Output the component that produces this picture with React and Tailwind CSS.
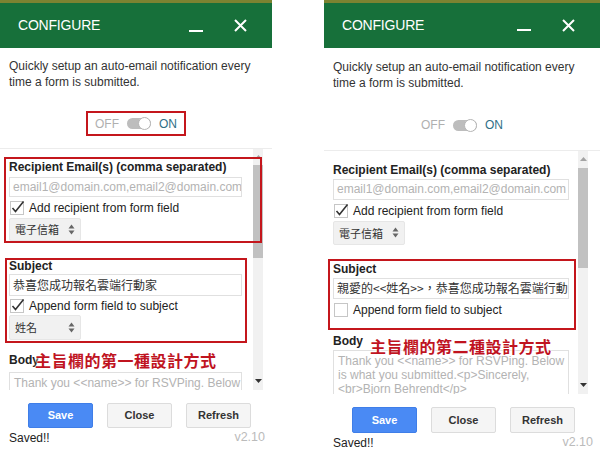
import React from 'react'

const SANS = { fontFamily: '"Liberation Sans", Arial, "Noto Sans CJK TC", sans-serif' }
const CJK = { fontFamily: '"Noto Sans CJK TC", "Liberation Sans", sans-serif' }

function Check({ on }) {
  return (
    <svg width="14" height="14" viewBox="0 0 14 14" className="shrink-0 overflow-visible">
      <rect x="0.5" y="0.5" width="13" height="13" fill="#fff" stroke="#c6c6c6" />
      {on && <path d="M2.5 7 L5.5 10.5 L13.5 0.5" fill="none" stroke="#333" strokeWidth="1.6" />}
    </svg>
  )
}

function Select({ label, h }) {
  return (
    <div className={`flex items-center justify-between w-[72px] ${h} pl-[5px] pr-[5px] bg-[#f1f1f1] border border-[#e6e6e6] rounded-[2px]`}>
      <span className="text-[11px] text-[#333]" style={CJK}>{label}</span>
      <svg width="7" height="11" viewBox="0 0 7 11">
        <path d="M0.5 4.5 L3.5 0.5 L6.5 4.5 Z M0.5 6.5 L3.5 10.5 L6.5 6.5 Z" fill="#666" />
      </svg>
    </div>
  )
}

function Scrollbar({ top, thumb, bottom }) {
  return (
    <div className="w-[10px] flex flex-col bg-[#f1f1f1]">
      <div className={`${top} flex items-center justify-center`}>
        <svg width="7" height="4" viewBox="0 0 7 4"><path d="M0 4 L3.5 0 L7 4 Z" fill="#a3a3a3" /></svg>
      </div>
      <div className={`${thumb} bg-[#c1c1c1]`} />
      <div className="flex-1" />
      <div className={`${bottom} flex items-center justify-center`}>
        <svg width="7" height="4" viewBox="0 0 7 4"><path d="M0 0 L3.5 4 L7 0 Z" fill="#333" /></svg>
      </div>
    </div>
  )
}

function Header() {
  return (
    <>
      <div className="h-[3px] bg-[#7c8331]" />
      <div className="h-[45px] bg-[#17703a] flex items-center pl-[18px] pr-[25px] text-white">
        <span className="text-[14px] tracking-[-0.2px]" style={SANS}>CONFIGURE</span>
        <div className="flex-1" />
        <div className="w-[14px] h-[2px] bg-white mt-[10px] mr-[31px]" />
        <svg width="13" height="13" viewBox="0 0 13 13">
          <path d="M1 1 L12 12 M12 1 L1 12" stroke="#fff" strokeWidth="2" />
        </svg>
      </div>
    </>
  )
}

function Footer({ mt, btn, savedMt }) {
  return (
    <div className={mt}>
      <div className="flex pl-[28px] gap-[14px]">
        <div className={`w-[65px] ${btn} flex items-center justify-center bg-[#4a8af4] border border-[#3f7ee8] rounded-[2px] text-white text-[11px] font-bold`} style={SANS}>Save</div>
        <div className={`w-[65px] ${btn} flex items-center justify-center bg-[#f5f5f5] border border-[#dcdcdc] rounded-[2px] text-[#333] text-[11px] font-bold`} style={SANS}>Close</div>
        <div className={`w-[65px] ${btn} flex items-center justify-center bg-[#f5f5f5] border border-[#dcdcdc] rounded-[2px] text-[#333] text-[11px] font-bold`} style={SANS}>Refresh</div>
      </div>
      <div className={`flex items-center pl-[9px] pr-[7px] ${savedMt} h-[15px]`}>
        <span className="text-[12px] text-[#222]" style={SANS}>Saved!!</span>
        <div className="flex-1" />
        <span className="text-[12.5px] text-[#bbb]" style={SANS}>v2.10</span>
      </div>
    </div>
  )
}

function Intro({ pt, toggleMt, sepMt, boxed }) {
  return (
    <>
      <div className={`${pt} px-[9px] text-[12px] leading-[16px] text-[#333] whitespace-nowrap`} style={SANS}>
        Quickly setup an auto-email notification every<br />time a form is submitted.
      </div>
      <div className={`${toggleMt} mx-auto w-[100px] h-[25px] flex items-center justify-center gap-[8px] border-2 ${boxed ? 'border-[#c4161c]' : 'border-transparent'}`}>
        <span className="text-[12px] text-[#b0b0b0]" style={SANS}>OFF</span>
        <div className="relative w-[24px] h-[11px] rounded-full bg-[#bdbdbd]">
          <div className="absolute right-0 top-[-1px] w-[13px] h-[13px] rounded-full bg-white border border-[#b5b5b5]" />
        </div>
        <span className="text-[12px] text-[#2f6f87]" style={SANS}>ON</span>
      </div>
      <div className={`${sepMt} border-b border-[#ececec]`} />
    </>
  )
}

function Note({ text, className }) {
  return (
    <div
      className={`absolute text-[16px] font-bold text-[#c0141f] tracking-[0.5px] [text-shadow:0_0_2px_#fff,0_0_2px_#fff,0_0_3px_#fff] ${className}`}
      style={CJK}
    >
      {text}
    </div>
  )
}

function LeftPanel() {
  return (
    <div className="relative w-[272px] h-[450px] shrink-0 flex flex-col bg-white">
      <Header />
      <Intro pt="pt-[10px]" toggleMt="mt-[21px]" sepMt="mt-[12px]" boxed />
      <div className="h-[241px] flex overflow-hidden">
        <div className="w-[253px] pl-[9px] pr-[11px] pt-[11px] overflow-hidden" style={SANS}>
          <div className="text-[12px] leading-[15px] font-bold text-[#222] whitespace-nowrap">Recipient Email(s) (comma separated)</div>
          <div className="mt-[2px] h-[20px] border border-[#e0e0e0] flex items-center px-[3px] text-[12px] text-[#b3b3b3] whitespace-nowrap overflow-hidden">email1@domain.com,email2@domain.com</div>
          <div className="mt-[3px] h-[16px] flex items-center gap-[5px] pl-[1px] text-[12px] text-[#222]"><Check on />Add recipient from form field</div>
          <div className="mt-[2px]"><Select label="電子信箱" h="h-[23px]" /></div>
          <div className="mt-[18px] text-[12px] leading-[15px] font-bold text-[#222]">Subject</div>
          <div className="h-[22px] border border-[#e0e0e0] flex items-center px-[3px] text-[12px] text-[#333] whitespace-nowrap overflow-hidden" style={CJK}>恭喜您成功報名雲端行動家</div>
          <div className="mt-[2px] h-[16px] flex items-center gap-[5px] pl-[1px] text-[12px] text-[#222]"><Check on />Append form field to subject</div>
          <div className="mt-[1px]"><Select label="姓名" h="h-[25px]" /></div>
          <div className="mt-[13px] text-[12px] leading-[15px] font-bold text-[#222]">Body</div>
          <div className="mt-[4px] h-[40px] border border-[#e0e0e0] px-[4px] pt-[3px] text-[12px] leading-[14px] text-[#b3b3b3] whitespace-nowrap">Thank you &lt;&lt;name&gt;&gt; for RSVPing. Below</div>
        </div>
        <Scrollbar top="h-[16px]" thumb="h-[93px]" bottom="h-[18px]" />
      </div>
      <Footer mt="mt-[13px]" btn="h-[25px]" savedMt="mt-[2px]" />

      <div className="absolute left-[4px] top-[157px] w-[258px] h-[86px] border-2 border-[#c4161c]" />
      <div className="absolute left-[5px] top-[258px] w-[242px] h-[85px] border-2 border-[#c4161c]" />
      <Note text="主旨欄的第一種設計方式" className="left-[35px] top-[348px]" />
    </div>
  )
}

function RightPanel() {
  return (
    <div className="relative w-[276px] h-[450px] shrink-0 flex flex-col bg-white">
      <Header />
      <Intro pt="pt-[11px]" toggleMt="mt-[22px]" sepMt="mt-[12px]" />
      <div className="h-[244px] flex overflow-hidden">
        <div className="w-[254px] pl-[9px] pr-[9px] pt-[12px] overflow-hidden" style={SANS}>
          <div className="text-[12px] leading-[15px] font-bold text-[#222] whitespace-nowrap">Recipient Email(s) (comma separated)</div>
          <div className="mt-[1px] h-[21px] border border-[#e0e0e0] flex items-center px-[3px] text-[12px] text-[#b3b3b3] whitespace-nowrap overflow-hidden">email1@domain.com,email2@domain.com</div>
          <div className="mt-[3px] h-[16px] flex items-center gap-[5px] pl-[1px] text-[12px] text-[#222]"><Check on />Add recipient from form field</div>
          <div className="mt-[2px]"><Select label="電子信箱" h="h-[24px]" /></div>
          <div className="mt-[17px] text-[12px] leading-[15px] font-bold text-[#222]">Subject</div>
          <div className="mt-[1px] h-[21px] border border-[#e0e0e0] flex items-center px-[3px] text-[12px] text-[#333] whitespace-nowrap overflow-hidden" style={CJK}>親愛的&lt;&lt;姓名&gt;&gt;，恭喜您成功報名雲端行動家</div>
          <div className="mt-[3px] h-[16px] flex items-center gap-[5px] pl-[1px] text-[12px] text-[#222]"><Check />Append form field to subject</div>
          <div className="mt-[16px] text-[12px] leading-[15px] font-bold text-[#222]">Body</div>
          <div className="mt-[1px] h-[60px] border border-[#e0e0e0] px-[4px] pt-[3px] text-[12px] leading-[14px] text-[#b3b3b3] whitespace-nowrap">
            Thank you &lt;&lt;name&gt;&gt; for RSVPing. Below<br />is what you submitted.&lt;p&gt;Sincerely,<br />&lt;br&gt;Bjorn Behrendt&lt;/p&gt;
          </div>
        </div>
        <Scrollbar top="h-[17px]" thumb="h-[100px]" bottom="h-[18px]" />
      </div>
      <Footer mt="mt-[13px]" btn="h-[26px]" savedMt="mt-[2px]" />

      <div className="absolute left-[4px] top-[259px] w-[248px] h-[71px] border-2 border-[#c4161c]" />
      <Note text="主旨欄的第二種設計方式" className="left-[46px] top-[334px]" />
    </div>
  )
}

export default function App() {
  return (
    <div className="w-[600px] h-[450px] flex bg-white overflow-hidden">
      <LeftPanel />
      <div className="w-[52px] shrink-0" />
      <RightPanel />
    </div>
  )
}
